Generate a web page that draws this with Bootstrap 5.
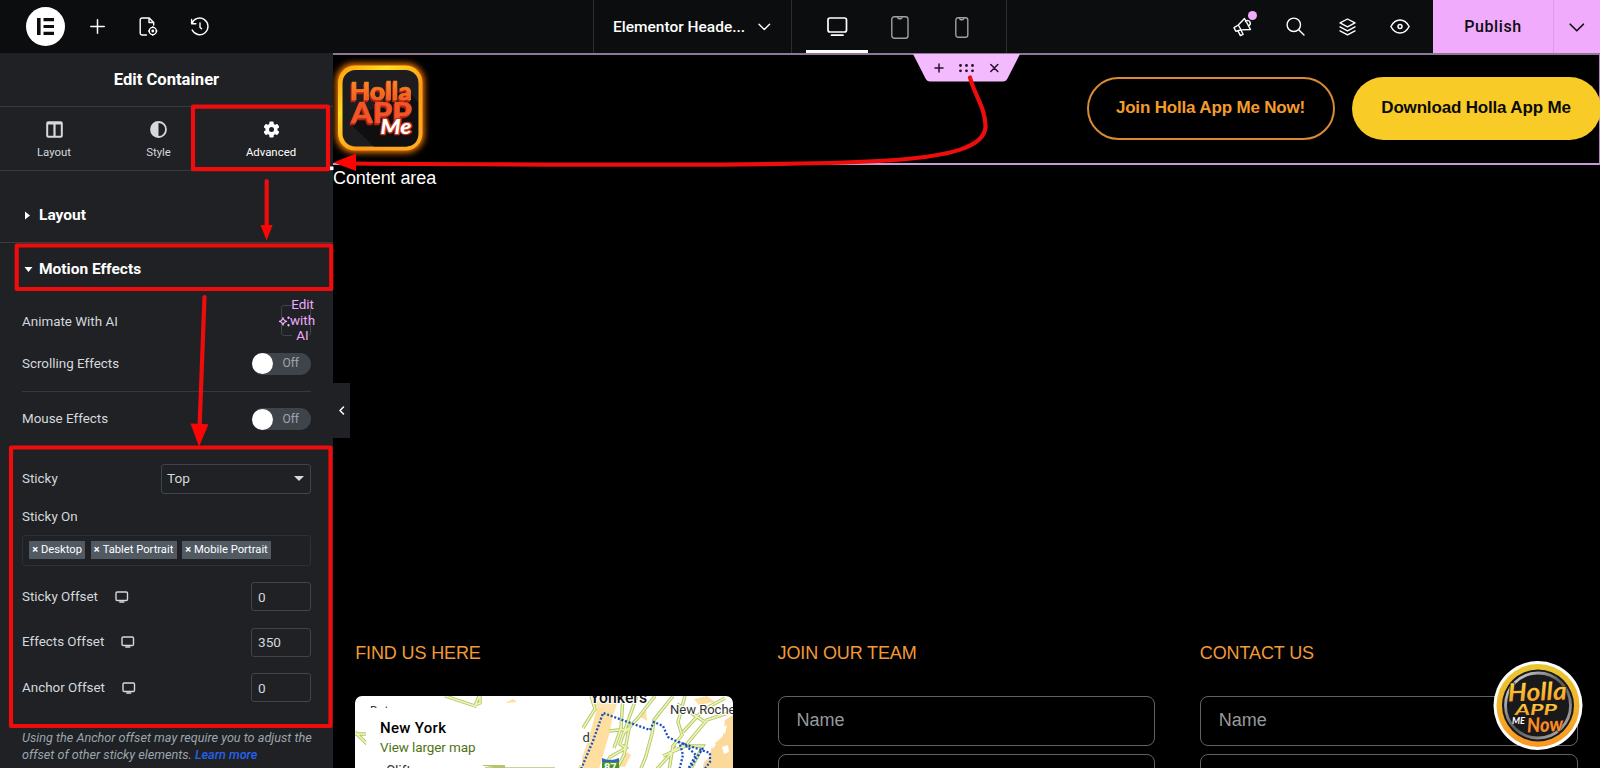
<!DOCTYPE html>
<html lang="en">
<head>
<meta charset="utf-8">
<meta name="viewport" content="width=device-width, initial-scale=1">
<title>Elementor Header editor</title>
<link href="https://cdn.jsdelivr.net/npm/bootstrap@5.3.0/dist/css/bootstrap.min.css" rel="stylesheet">
<style>
body{height:768px;overflow:hidden;background:#000;color:#fff;font-family:Roboto,sans-serif;font-size:13.4px;line-height:1.2}
svg{display:block;flex:none}
.ln{fill:none;stroke:currentColor;stroke-linecap:round;stroke-linejoin:round}
.topbar{height:53px;background:#0c0d0e}
.brand-dot{width:39px;height:39px;background:#fff;margin-left:26px}
.doc-title{width:199px;border-left:1px solid #2b2d30;border-right:1px solid #2b2d30;padding:1px 20px 0 19px;font-size:15.5px;font-weight:500}
.devices{width:215px;border-right:1px solid #2b2d30;padding-left:14px}
.device{width:62.4px;color:#9da0a4;border-bottom:3px solid transparent;padding-top:4px}
.device.active{color:#fff;border-color:#fff}
.tool{width:52.3px}
.new-dot{position:absolute;width:9px;height:9px;background:#f0abfc;left:31.5px;top:11px}
.publish{width:121px;background:#f0abfc;color:#0c0d0e;font-size:16px;font-weight:500;letter-spacing:.6px;border-right:1px solid #dd9ae9;padding-top:1px}
.publish-more{width:46px;background:#f0abfc;color:#0c0d0e;padding-left:15px;padding-top:1px}
.side{width:333px;background:#1f2124;color:#d5d8dc;overflow:hidden}
.side-title{height:54px;font-size:16.6px;font-weight:700;color:#fff;border-bottom:1px solid #35383c}
.tabs{height:64px;border-bottom:1px solid #35383c;font-size:11.4px}
.tab-i{padding-top:14px;gap:8px}
.sect{padding-left:25px;font-size:15.5px;font-weight:700;color:#fff;gap:9px}
.ctl{padding:0 22px}
.ctl-line{border-top:1px solid #35383c;margin:0 22px}
.ai-btn{width:30px;height:31px;border:1px solid #3f444b;border-radius:3px;color:#f0abfc;position:relative;line-height:15.5px;text-align:center}
.ai-btn span{position:absolute;left:7.5px;top:-9px;width:26px;background:linear-gradient(#1f2124,#1f2124) 2px 0/17px 100% no-repeat}
.ai-btn svg{position:absolute;left:-4px;top:8px}
.sw{width:59px;height:22px;border-radius:11px;background:#3f444b;color:#9da5ae;font-size:12px;padding-right:12px}
.sw i{width:21px;height:21px;background:#fff}
.box{border:1px solid #3f444b;border-radius:3px;color:#d5d8dc}
.sel{width:150px;height:30px;padding:0 6px 0 5px;font-size:13.7px}
.num{width:60px;height:29px;padding-left:6px;font-size:13.6px}
.tagbox{height:31px;border-color:#2d3035;padding-left:6px;gap:5.5px}
.tag-i{background:#515962;color:#fff;font-size:11.2px;height:18px;padding:0 3.2px;white-space:nowrap}
.tag-i b{font-size:11px;margin-right:3px}
.note{padding:0 20px 0 22px;font-size:12.65px;line-height:17.3px;font-style:italic;color:#9da5ae}
.note a{color:#2563eb;font-weight:500;text-decoration:none}
.collapse-tab{position:absolute;left:333px;top:383px;width:17px;height:55px;background:#1f2124}
.site{font-family:"Liberation Sans",Arial,sans-serif;font-size:18px;background:#000}
.site-head{height:112px;border-top:2px solid #8f7795;border-right:1px solid #b583c0;border-bottom:2px solid #c99bd6}
.handle{position:absolute;left:580px;top:-1px}
.pill{height:62.5px;border-radius:31.5px;font-size:17px;font-weight:700;letter-spacing:-.17px}
.pill-o{width:248px;border:2px solid #d98a34;color:#f39c2d}
.pill-y{width:249px;background:#f8cb27;color:#0b0b0b}
.foot-col{padding:0 22.2px}
.foot-col h4{font-size:18px;font-weight:400;letter-spacing:-.12px;color:#f09a38;margin:0 0 31px;line-height:24px}
.fld{height:50px;border:1.5px solid #606266;border-radius:8px;color:#97999c;padding-left:18px;margin-bottom:8px}
.map{height:73px;border-radius:7px 7px 0 0;overflow:hidden;background:#fff}
.chat{position:absolute;left:1493px;top:661px}
.marks{position:absolute;left:0;top:0;pointer-events:none}
.extrude{filter:drop-shadow(-1px 2px 0 #b81f14)}
</style>
</head>
<body class="d-flex flex-column position-relative">
<header class="topbar d-flex align-items-stretch justify-content-between flex-shrink-0">
  <div class="d-flex align-items-center" style="width:593px">
    <div class="brand-dot rounded-circle d-flex align-items-center justify-content-center">
      <svg width="17" height="17" fill="#0c0d0e"><path d="M0 0h3.6v17H0zM6.500 0H17v3.200H6.500zM6.500 6.900H17v3.200H6.500zM6.500 13.800H17V17H6.500z"/></svg></div>
    <svg class="ln" style="margin-left:24.500px" width="15" height="15" stroke-width="1.500"><path d="M7.500 .8v13.400M.8 7.500h13.400"/></svg>
    <svg class="ln" style="margin-left:34.500px" width="20" height="20" stroke-width="1.400"><path d="M7.500 18H3.200A2 2 0 0 1 1.200 16V3a2 2 0 0 1 2-2h7l4.500 4.500V8M10 1v4.500h4.700"/><circle cx="13.800" cy="14" r="3.600"/><circle cx="13.800" cy="14" r=".7"/><path d="M13.800 9.700v.6M13.800 17.700v.6M9.700 14h.6M17.300 14h.6"/></svg>
    <svg class="ln" style="margin-left:31px" width="20" height="20" stroke-width="1.400"><path d="M1.600 2.400v4.300h4.300M1.900 6.400A8.300 8.300 0 1 1 2.200 13M10 6v4.300l1.500 1.500"/></svg>
  </div>
  <div class="doc-title d-flex align-items-center justify-content-between"><span class="text-nowrap">Elementor Heade...</span>
    <svg class="ln" width="13" height="8" stroke-width="1.400"><path d="M1 1.200l5.300 5.300 5.300-5.300"/></svg></div>
  <div class="devices d-flex">
    <div class="device active d-flex align-items-center justify-content-center"><svg class="ln" width="21" height="20" stroke-width="1.700"><rect x="1" y="1" width="18.500" height="14" rx="2"/><path d="M4.500 18.200h11.500"/></svg></div>
    <div class="device d-flex align-items-center justify-content-center"><svg class="ln" width="18" height="23" stroke-width="1.400"><rect x=".8" y=".8" width="16.200" height="21.400" rx="2.500"/><path d="M6.500 1.200q.3 1.500 1.300 1.500h2q1 0 1.300-1.500"/></svg></div>
    <div class="device d-flex align-items-center justify-content-center"><svg class="ln" width="14" height="21" stroke-width="1.400"><rect x=".8" y=".8" width="12" height="19.400" rx="2.200"/><path d="M4.500 1.200q.3 1.500 1.200 1.500h2q1 0 1.200-1.500"/></svg></div>
  </div>
  <div class="d-flex align-items-stretch justify-content-end flex-grow-1">
    <div class="tool d-flex align-items-center justify-content-center position-relative"><svg class="ln" width="20" height="20" stroke-width="1.400"><path d="M11.500 1.500l6 11-9.300.4-5.400 1.300-1.800-3.600L5.300 8z M12.500 4.500q3-2 4.400.3t-1.400 4.200M5.300 8l2.800 5M5 13.900l2.400 4.700 2.700-1.300-2.200-4.300"/></svg><i class="new-dot rounded-circle"></i></div>
    <div class="tool d-flex align-items-center justify-content-center"><svg class="ln" width="19" height="19" stroke-width="1.400"><circle cx="7.800" cy="7.800" r="6.700"/><path d="M12.700 12.700l5.300 5.300"/></svg></div>
    <div class="tool d-flex align-items-center justify-content-center"><svg class="ln" width="17" height="18" stroke-width="1.400"><path d="M8.500 1L16 4.900 8.500 8.800 1 4.900zM1 8.900l7.500 3.900L16 8.900M1 12.900l7.500 3.900 7.500-3.900"/></svg></div>
    <div class="tool d-flex align-items-center justify-content-center" style="margin-right:7px"><svg class="ln" width="20" height="15" stroke-width="1.500"><path d="M.9 7.500Q4.200 1 10 1t9.100 6.500Q15.800 14 10 14T.9 7.500z"/><circle cx="10" cy="7.500" r="2"/></svg></div>
    <div class="publish d-flex align-items-center justify-content-center">Publish</div>
    <div class="publish-more d-flex align-items-center"><svg class="ln" width="16" height="9" stroke-width="1.600"><path d="M1.200 1.200l6.600 6.600 6.600-6.600"/></svg></div>
  </div>
</header>

<div class="d-flex flex-grow-1 align-items-stretch" style="min-height:0">
  <aside class="side flex-shrink-0">
    <div class="side-title d-flex align-items-center justify-content-center">Edit Container</div>
    <div class="tabs d-flex">
      <div class="tab-i d-flex flex-column align-items-center" style="width:108px"><svg width="17" height="17"><rect x="1.200" y="1.200" width="14.600" height="14.600" rx="1" fill="none" stroke="#d5d8dc" stroke-width="2"/><path d="M1 2.500h15M8.500 2v14" stroke="#d5d8dc" stroke-width="2.200"/></svg>Layout</div>
      <div class="tab-i d-flex flex-column align-items-center" style="width:101px"><svg width="17" height="17"><circle cx="8.500" cy="8.500" r="7.500" fill="none" stroke="#d5d8dc" stroke-width="1.800"/><path d="M8.500 1a7.500 7.500 0 0 0 0 15z" fill="#d5d8dc"/></svg>Style</div>
      <div class="tab-i d-flex flex-column align-items-center text-white" style="width:124px"><svg width="17" height="17" viewBox="0 0 17 17"><g fill="#fff"><circle cx="8.500" cy="8.500" r="6"/><rect x="6.300" y=".5" width="4.400" height="16" rx="1.200"/><rect x="6.300" y=".5" width="4.400" height="16" rx="1.200" transform="rotate(60 8.500 8.500)"/><rect x="6.300" y=".5" width="4.400" height="16" rx="1.200" transform="rotate(120 8.500 8.500)"/></g><circle cx="8.500" cy="8.500" r="2.500" fill="#1f2124"/></svg>Advanced</div>
    </div>
    <div class="sect d-flex align-items-center" style="height:72px;padding-top:17px;border-bottom:1px solid #3a3d41"><svg width="5" height="9" fill="#fff"><path d="M0 .5l5 4-5 4z"/></svg>Layout</div>
    <div class="sect d-flex align-items-center" style="height:53px;padding-left:24px;gap:6px"><svg width="9" height="5" fill="#fff"><path d="M.5 0h8l-4 5z"/></svg>Motion Effects</div>
    <div class="ctl d-flex align-items-center justify-content-between" style="height:49px"><span class="pt-1 mt-n1">Animate With AI</span>
      <div class="ai-btn"><svg width="13" height="14" fill="none" stroke="#f0abfc" stroke-width="1.200" style="z-index:1"><path d="M5 3.200Q5.400 7 9 7.400 5.400 7.800 5 11.500 4.600 7.800 1 7.400 4.600 7 5 3.200z"/><path d="M10.500 2.500v2.400M9.300 3.700h2.400M10.500 10v2.400M9.300 11.200h2.400"/></svg><span>Edit<br>with<br>AI</span></div></div>
    <div class="ctl d-flex align-items-center justify-content-between" style="height:37px"><span style="padding-top:1px">Scrolling Effects</span><div class="sw d-flex align-items-center justify-content-between"><i class="rounded-circle"></i>Off</div></div>
    <div class="ctl-line" style="margin-top:9px"></div>
    <div class="ctl d-flex align-items-center justify-content-between" style="height:54px"><span>Mouse Effects</span><div class="sw d-flex align-items-center justify-content-between"><i class="rounded-circle"></i>Off</div></div>
    <div class="ctl d-flex align-items-center justify-content-between" style="height:65px"><span style="padding-top:1px">Sticky</span><div class="box sel d-flex align-items-center justify-content-between">Top<svg width="10" height="5" fill="#d5d8dc"><path d="M0 0h10L5 5z"/></svg></div></div>
    <div class="ctl" style="height:25.500px"><span class="d-block" style="margin-top:-2px">Sticky On</span></div>
    <div class="ctl"><div class="box tagbox d-flex align-items-center">
      <span class="tag-i d-flex align-items-center"><b>×</b>Desktop</span><span class="tag-i d-flex align-items-center"><b>×</b>Tablet Portrait</span><span class="tag-i d-flex align-items-center"><b>×</b>Mobile Portrait</span></div></div>
    <div style="padding-top:8.500px">
    <div class="ctl d-flex align-items-center" style="height:45.500px"><span>Sticky Offset</span><svg class="ln" width="14" height="12" stroke-width="1.400" style="margin-left:17px"><rect x="1" y="1" width="11.500" height="8.500" rx="1.200"/><path d="M4.800 11h4"/></svg><div class="box num ms-auto d-flex align-items-center">0</div></div>
    <div class="ctl d-flex align-items-center" style="height:45.500px"><span>Effects Offset</span><svg class="ln" width="14" height="12" stroke-width="1.400" style="margin-left:17px"><rect x="1" y="1" width="11.500" height="8.500" rx="1.200"/><path d="M4.800 11h4"/></svg><div class="box num ms-auto d-flex align-items-center">350</div></div>
    <div class="ctl d-flex align-items-center" style="height:45.500px"><span>Anchor Offset</span><svg class="ln" width="14" height="12" stroke-width="1.400" style="margin-left:17px"><rect x="1" y="1" width="11.500" height="8.500" rx="1.200"/><path d="M4.800 11h4"/></svg><div class="box num ms-auto d-flex align-items-center">0</div></div>
    </div>
    <div class="note" style="padding-top:18px"><span class="text-nowrap">Using the Anchor offset may require you to adjust the</span><br>offset of other sticky elements. <a href="#">Learn more</a></div>
  </aside>

  <main class="site flex-grow-1 d-flex flex-column position-relative" style="min-width:0">
    <div class="site-head d-flex align-items-center justify-content-between position-relative flex-shrink-0">
      <svg width="100" height="108" viewBox="333 55.500 100 108">
        <defs>
          <linearGradient id="rim" x1="0" y1="0" x2="1" y2="1"><stop offset="0" stop-color="#ff9a10"/><stop offset=".3" stop-color="#ffdf20"/><stop offset=".6" stop-color="#ff9a1a"/><stop offset="1" stop-color="#ffb020"/></linearGradient>
          <linearGradient id="fire" x1="0" y1="0" x2="0" y2="1"><stop offset="0" stop-color="#ff9a2a"/><stop offset="1" stop-color="#ee4a1e"/></linearGradient>
          <filter id="glow" x="-20%" y="-20%" width="140%" height="140%"><feGaussianBlur stdDeviation="3"/></filter>
        </defs>
        <rect x="336" y="64" width="88" height="89" rx="18" fill="#ff7a00" filter="url(#glow)"/>
        <rect x="338" y="66" width="84.500" height="85" rx="17" fill="url(#rim)"/>
        <rect x="342.500" y="70.500" width="76" height="76.500" rx="13" fill="#1d1c1e"/>
        <path d="M350 124l24 23h32q12-1 12-12v-32l-12-15z" fill="#0f0f10"/>
        <g font-family="Lato,sans-serif" font-weight="900" stroke-linejoin="round">
          <g class="extrude"><text x="350" y="100.500" font-size="25.500" fill="url(#fire)" stroke="#f47a22" stroke-width=".7" textLength="62" lengthAdjust="spacingAndGlyphs">Holla</text></g>
          <g class="extrude"><text x="351" y="123" font-size="28" fill="#f0562a" stroke="#e9501f" stroke-width=".6" textLength="61" lengthAdjust="spacingAndGlyphs">APP</text></g>
          <text x="380.500" y="134.500" font-size="20" font-style="italic" fill="#fff" stroke="#c8341c" stroke-width="2.500" paint-order="stroke" textLength="31" lengthAdjust="spacingAndGlyphs">Me</text>
        </g>
      </svg>
      <svg class="handle" width="107" height="28"><path d="M0 0h107L94.500 24.500Q93 27.500 90 27.500H17Q14 27.500 12.500 24.500z" fill="#f3bafd"/><g stroke="#26112b" stroke-width="1.500" stroke-linecap="round"><path d="M22 14h8M26 10v8M77.800 10.500l7 7M84.800 10.500l-7 7"/></g><g fill="#26112b"><circle cx="47.500" cy="11.500" r="1.400"/><circle cx="53.500" cy="11.500" r="1.400"/><circle cx="59.500" cy="11.500" r="1.400"/><circle cx="47.500" cy="16.800" r="1.400"/><circle cx="53.500" cy="16.800" r="1.400"/><circle cx="59.500" cy="16.800" r="1.400"/></g></svg>
      <div class="d-flex" style="gap:17px;margin-right:-1.500px;padding-bottom:1px">
        <div class="pill pill-o d-flex align-items-center justify-content-center text-nowrap">Join Holla App Me Now!</div>
        <div class="pill pill-y d-flex align-items-center justify-content-center text-nowrap">Download Holla App Me</div>
      </div>
    </div>
    <div style="line-height:26px;letter-spacing:-.08px">Content area</div>
    <div class="row g-0 mt-auto flex-shrink-0 overflow-hidden" style="height:127px">
      <div class="col-4 foot-col"><h4>FIND US HERE</h4>
        <div class="map">
          <svg width="379" height="73" viewBox="0 0 379 73">
            <path d="M243 9h17l-6 30-12 41h-22l12-32z" fill="#ffdf9f"/><path d="M238 9l12-9h14l-5 18z" fill="#ffe3b0"/>
            <path d="M379 18l-9 6-2 16-11 10-3 12-5 4-3 14h33z" fill="#fbd99a"/>
            <path d="M352 0l-13 3 5 6 16-3zM284 20l7-5 1 10zM262 70l10-14 4 3-6 12zM150 7l8-4 4 3z" fill="#ffdf9f"/>
            <path d="M365 33l7-4-2 9zM367 51l6-2 1 7-5 2zM356 47l5 1-3 5z" fill="#fff"/>
            <g fill="none" stroke="#b3c66a" stroke-width="3.400"><path d="M90 0l30 10 4-10M118 10l7-3V0M0 38h14M0 36l12 12M228 32l12-19-4-13M282 0l-8 22-9 26 6 4-16 9-10 19M254 35l20-2-5 26-11 21M300 0l-17 22-14 15M318 0l-19 24-2 14-6 22-8 20M330 0l-7 26 4 13-9 11-5 30M370 2l-22 12-20 22M379 15l-27 9-22 26-22 10M268 0l-2 32-7 20M322 8l28 18M326 50l22 0-16 30M302 73l20-22M150 71l-22-3M130 73h70"/></g>
            <g fill="none" stroke="#eef5b5" stroke-width="1.600"><path d="M90 0l30 10 4-10M118 10l7-3V0M0 38h14M0 36l12 12M228 32l12-19-4-13M282 0l-8 22-9 26 6 4-16 9-10 19M254 35l20-2-5 26-11 21M300 0l-17 22-14 15M318 0l-19 24-2 14-6 22-8 20M330 0l-7 26 4 13-9 11-5 30M370 2l-22 12-20 22M379 15l-27 9-22 26-22 10M268 0l-2 32-7 20M322 8l28 18M326 50l22 0-16 30M302 73l20-22"/></g>
            <path d="M226 73l12-28 10-28 47 17 4-8 9 4 5 11 10 5 32 11v9l-9 12M324 45l4 14-4 16M328 47l13 12-8 14M348 52l-13 20" fill="none" stroke="#1a4fc0" stroke-width="2.300" stroke-dasharray="2 1.800"/>
            <g font-family="Roboto,sans-serif" fill="#333" stroke="#fff" stroke-width="2" paint-order="stroke">
              <text x="235" y="6.500" font-size="16" font-weight="500" fill="#111" textLength="57" lengthAdjust="spacingAndGlyphs">Yonkers</text>
              <text x="315" y="17.700" font-size="13">New Rochelle</text><text x="227.500" y="46" font-size="13">d</text><text x="15" y="19" font-size="12">Dater</text></g>
            <rect x="11" y="12" width="216" height="57" fill="#fff"/>
            <g font-family="Roboto,sans-serif"><text x="31" y="79.500" font-size="14" fill="#333" textLength="40">Clifton</text>
              <text x="25" y="36.500" font-size="15" font-weight="500" fill="#000" textLength="66">New York</text><text x="25" y="56" font-size="13.500" fill="#4f7416" textLength="95.500">View larger map</text></g>
            <path d="M247 62q8 4 17 0v4h-17z" fill="#2f69b4"/><path d="M247 66h17v14h-17z" fill="#4b9229"/><text x="249" y="74.500" font-family="Roboto,sans-serif" font-size="11" font-weight="700" fill="#fff">87</text>
          </svg></div></div>
      <div class="col-4 foot-col"><h4>JOIN OUR TEAM</h4><div class="fld d-flex align-items-center">Name</div><div class="fld"></div></div>
      <div class="col-4 foot-col"><h4>CONTACT US</h4><div class="fld d-flex align-items-center">Name</div><div class="fld"></div></div>
    </div>
  </main>
</div>

<div class="collapse-tab d-flex align-items-center justify-content-center"><svg class="ln" width="6" height="9" stroke-width="1.500"><path d="M4.500 1L1 4.500 4.500 8"/></svg></div>

<svg class="chat" width="90" height="90" viewBox="0 0 90 90">
  <defs><linearGradient id="ring" x1="0" y1="0" x2="0" y2="1"><stop offset="0" stop-color="#e8c832"/><stop offset=".5" stop-color="#f2b22c"/><stop offset="1" stop-color="#fb9620"/></linearGradient>
  <linearGradient id="gold" x1="0" y1="0" x2="0" y2="1"><stop offset="0" stop-color="#ffe14a"/><stop offset="1" stop-color="#f5961e"/></linearGradient>
  <linearGradient id="steel" x1="0" y1="0" x2="1" y2="1"><stop offset="0" stop-color="#eee"/><stop offset=".5" stop-color="#55565a"/><stop offset="1" stop-color="#bbb"/></linearGradient></defs>
  <circle cx="45" cy="44.500" r="44.500" fill="#fff"/><circle cx="45" cy="44.500" r="41.500" fill="url(#ring)"/><circle cx="45" cy="44.500" r="36" fill="#19191b"/><circle cx="45" cy="44.500" r="32.500" fill="#19191b" stroke="url(#steel)" stroke-width="2.800"/>
  <g font-family="Lato,sans-serif" font-style="italic" font-weight="700"><text x="15" y="39.500" font-size="25" fill="url(#gold)" stroke="#19191b" stroke-width="1.500" paint-order="stroke" textLength="59" lengthAdjust="spacingAndGlyphs" transform="rotate(-2 45 40)">Holla</text>
  <text x="22" y="53.500" font-size="15" fill="url(#gold)" textLength="42" lengthAdjust="spacingAndGlyphs">APP</text>
  <text x="19" y="62.500" font-size="8.500" fill="#fff" textLength="13" lengthAdjust="spacingAndGlyphs">ME</text>
  <text x="34" y="71" font-size="20" fill="#f98a24" stroke="#19191b" stroke-width="1" paint-order="stroke" font-weight="900" textLength="36" lengthAdjust="spacingAndGlyphs" transform="rotate(-3 45 66)">Now</text></g>
</svg>

<svg class="marks" width="1600" height="768" fill="none" stroke="#ee0c0c" stroke-width="4.200" stroke-linecap="round">
  <g stroke-linejoin="round"><rect x="193" y="106.700" width="135" height="62.500"/><rect x="16.700" y="245.500" width="314.500" height="43.500"/><rect x="11" y="447.500" width="319.500" height="278.500"/></g>
  <path d="M266.700 181v48M204.500 297L199.500 428"/>
  <path d="M970 77.500C974 94 986 109 985.500 127C984 146 955 157 878 161C790 166 590 165 352 163.500"/>
  <g fill="#fb0505" stroke="none"><path d="M260.500 225h12.200l-6.100 15.500zM190.500 423.500l18 .8-9.500 22.500zM333.500 162.500l22.500-9v17.500z"/></g>
  <rect x="330" y="166.500" width="3.500" height="3.500" fill="#fff" stroke="none"/>
</svg>
<script src="https://cdn.jsdelivr.net/npm/bootstrap@5.3.0/dist/js/bootstrap.bundle.min.js"></script>
</body>
</html>
